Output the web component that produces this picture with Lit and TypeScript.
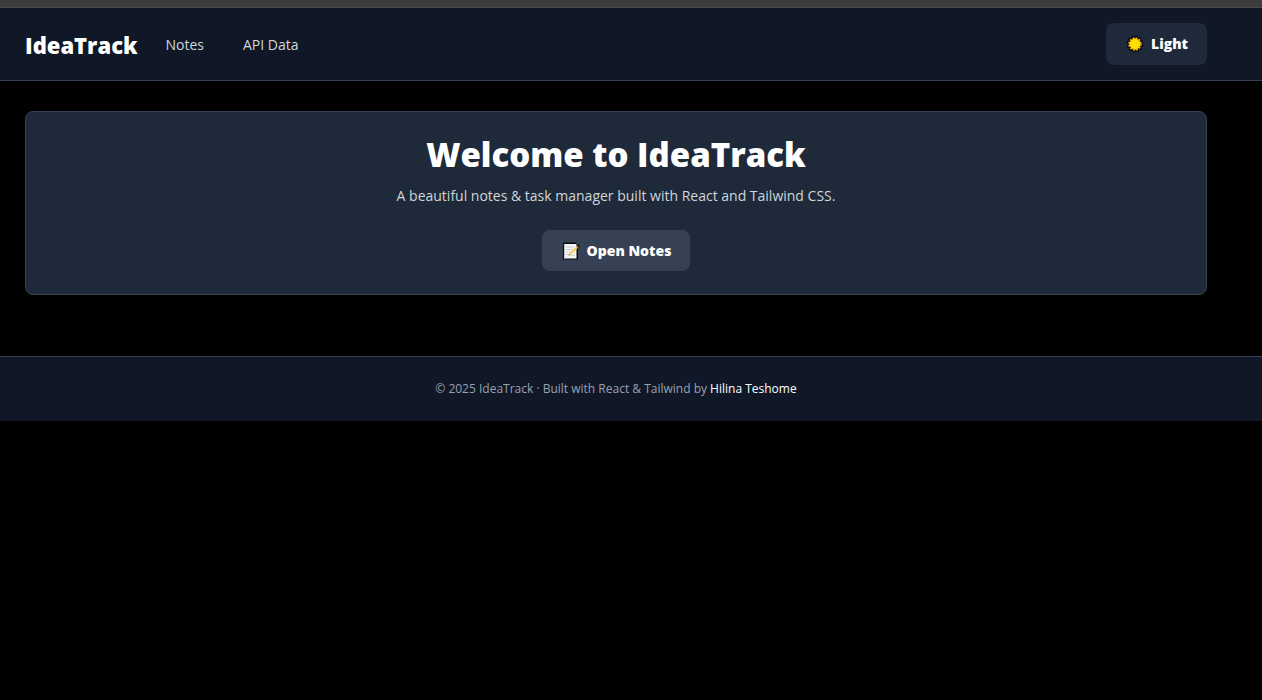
import { LitElement, html, css } from "lit";
import { customElement } from "lit/decorators.js";

@customElement("app-root")
export class AppRoot extends LitElement {
  static styles = css`
    :host {
      display: block;
      min-height: 100vh;
      background: #000;
      color: #fff;
      font-family: "Open Sans", "Noto Sans", sans-serif;
      font-size: 14px;
      line-height: 24px;
    }
    * {
      box-sizing: border-box;
    }
    .strip {
      height: 8px;
      background: #3c3c3c;
      border-bottom: 1px solid #4a4a4a;
    }
    .header {
      background: #101828;
      border-bottom: 1px solid #364153;
    }
    .inner {
      max-width: 1280px;
      padding: 0 55px 0 25px;
    }
    .bar {
      display: flex;
      align-items: center;
      justify-content: space-between;
      padding-top: 15px;
      padding-bottom: 15px;
    }
    .nav {
      display: flex;
      align-items: center;
      padding-top: 2px;
    }
    a {
      color: inherit;
      text-decoration: none;
    }
    .brand {
      font-size: 22px;
      font-weight: 800;
      margin-right: 28px;
    }
    .link {
      color: #d1d5dc;
      margin-right: 39px;
    }
    .btn {
      display: inline-flex;
      align-items: center;
      gap: 7px;
      height: 42px;
      padding: 0 19px 0 20px;
      border: 0;
      border-radius: 8px;
      background: #1e2939;
      color: #fff;
      font: inherit;
      font-weight: 800;
      cursor: pointer;
    }
    .btn svg {
      width: 18px;
      height: 18px;
      flex: none;
    }
    .open {
      height: 41px;
      background: #364153;
    }
    .main {
      padding-top: 30px;
      padding-bottom: 61px;
    }
    .card {
      background: #1e2939;
      border: 1px solid #364153;
      border-radius: 8px;
      padding: 23px;
      text-align: center;
    }
    h1 {
      margin: 0 0 9px;
      font-size: 33px;
      font-weight: 800;
      line-height: 40px;
    }
    p {
      margin: 0;
    }
    .lead {
      color: #d1d5dc;
      margin-bottom: 22px;
    }
    .footer {
      background: #101828;
      border-top: 1px solid #364153;
      text-align: center;
      font-size: 12px;
      line-height: 18px;
      color: #99a1af;
    }
    .foot {
      padding-top: 23px;
      padding-bottom: 23px;
    }
    .author {
      color: #fff;
    }
  `;

  render() {
    return html`
      <div class="strip"></div>
      <header class="header">
        <div class="inner bar">
          <nav class="nav">
            <a class="brand" href="#">IdeaTrack</a>
            <a class="link" href="#notes">Notes</a>
            <a class="link" href="#api">API Data</a>
          </nav>
          <button class="btn" type="button">
            <svg viewBox="0 0 18 18" aria-hidden="true">
              <circle cx="9" cy="9" r="7.2" fill="none" stroke="#080b10" stroke-width="2.4" stroke-dasharray="2.400 1.370" />
              <circle cx="9" cy="9" r="7" fill="#080b10" />
              <circle cx="9" cy="9" r="6" fill="none" stroke="#ffb900" stroke-width="1.6" stroke-dasharray="1.640 1.502" />
              <circle cx="9" cy="9" r="5.4" fill="#ffdf00" stroke="#ffb900" stroke-width="0.6" />
            </svg>
            Light
          </button>
        </div>
      </header>
      <main class="inner main">
        <section class="card">
          <h1>Welcome to IdeaTrack</h1>
          <p class="lead">A beautiful notes &amp; task manager built with React and Tailwind CSS.</p>
          <button class="btn open" type="button">
            <svg viewBox="0 0 18 18" aria-hidden="true">
              <path d="M1 .5h13l1 2 1-.5 2 2-2 2.500V17.500H1z" fill="#090b0f" />
              <path d="M2 2h12.500v14.500H2z" fill="#f5f5f5" />
              <path d="M2 2h1.200v14.500H2z" fill="#c9c9c9" />
              <path d="M4 5h8M4 7.500h7M4 10h5M4 12.500h3M9 13.500h4" stroke="#cfd0d4" stroke-width="1" />
              <path d="M7 13.200l.8-2 6.500-6.500 1.400 1.400L9 12.500z" fill="#f8c83c" />
              <path d="M14.300 4.700l1-1 1.400 1.400-1 1z" fill="#e58b76" />
              <path d="M6.600 13.700l.8-1.700 1 1z" fill="#5c5145" />
            </svg>
            Open Notes
          </button>
        </section>
      </main>
      <footer class="footer">
        <div class="inner foot">
          <p>© 2025 IdeaTrack · Built with React &amp; Tailwind by <a class="author" href="#author">Hilina Teshome</a></p>
        </div>
      </footer>
    `;
  }
}
